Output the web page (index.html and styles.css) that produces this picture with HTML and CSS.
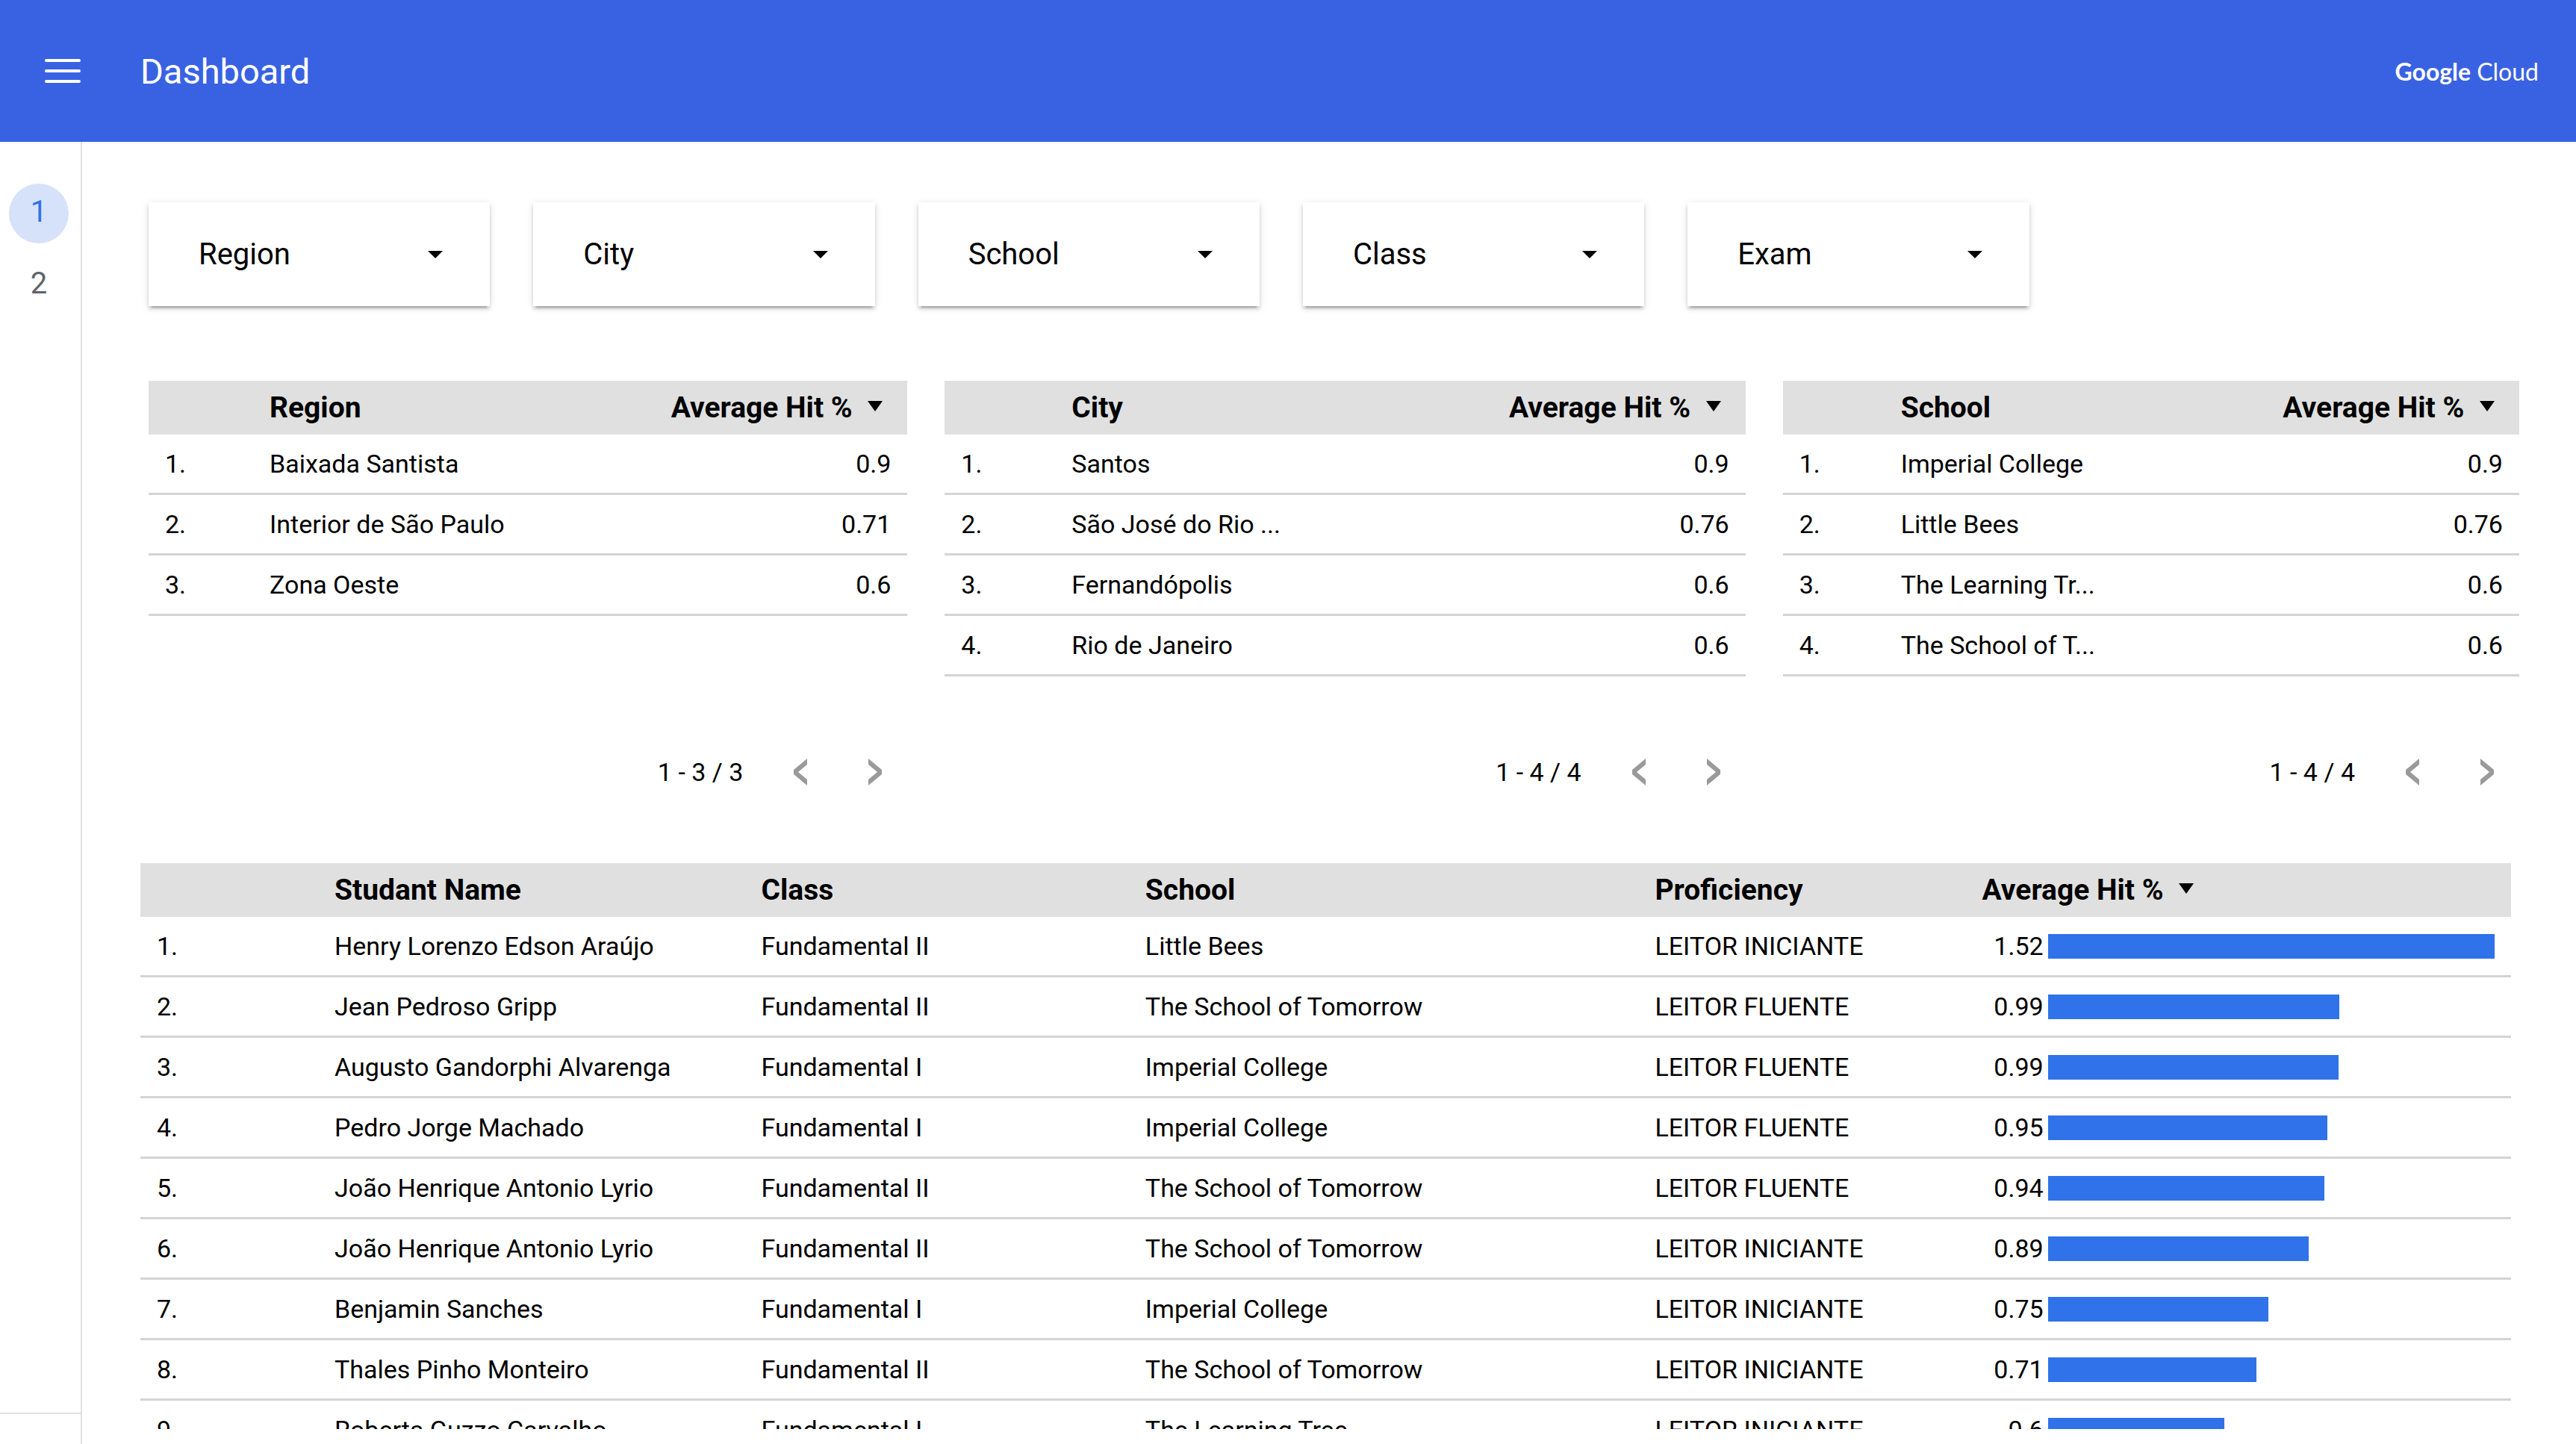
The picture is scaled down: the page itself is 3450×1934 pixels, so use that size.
FILE: index.html
```html
<!DOCTYPE html>
<html lang="en">
<head>
<meta charset="utf-8">
<title>Dashboard</title>
<meta name="viewport" content="width=device-width, initial-scale=1">
<link rel="stylesheet" href="styles.css">
</head>
<body>
<header class="topbar">
  <button class="menu-button" type="button" aria-label="Menu">
    <svg viewBox="0 0 48 32" width="48" height="32" fill="none" stroke="#fff" stroke-width="4" stroke-linecap="round"><path d="M2 2H46M2 16H46M2 30H46"/></svg>
  </button>
  <h1 class="title">Dashboard</h1>
  <a class="brand" href="#"><span class="brand-google">Google</span><span class="brand-cloud">Cloud</span></a>
</header>

<div class="layout">
  <nav class="pages" aria-label="Pages">
    <div class="page-list">
      <a class="page current" href="#" aria-current="page">1</a>
      <a class="page" href="#">2</a>
    </div>
    <div class="pages-foot"></div>
  </nav>

  <main class="report">
    <form class="filters">
      <label class="filter"><select aria-label="Region"><option>Region</option></select><svg class="caret" viewBox="0 0 20 10"><path d="M0 0H20L10 10Z"/></svg></label>
      <label class="filter"><select aria-label="City"><option>City</option></select><svg class="caret" viewBox="0 0 20 10"><path d="M0 0H20L10 10Z"/></svg></label>
      <label class="filter"><select aria-label="School"><option>School</option></select><svg class="caret" viewBox="0 0 20 10"><path d="M0 0H20L10 10Z"/></svg></label>
      <label class="filter"><select aria-label="Class"><option>Class</option></select><svg class="caret" viewBox="0 0 20 10"><path d="M0 0H20L10 10Z"/></svg></label>
      <label class="filter"><select aria-label="Exam"><option>Exam</option></select><svg class="caret" viewBox="0 0 20 10"><path d="M0 0H20L10 10Z"/></svg></label>
    </form>

    <div class="summaries">
      <section class="panel">
        <table class="data by-region">
          <colgroup><col class="c-index"><col class="c-name"><col></colgroup>
          <thead><tr><th></th><th>Region</th><th class="num">Average Hit % <svg class="sort" viewBox="0 0 20 14"><path d="M0 0H20L10 14Z"/></svg></th></tr></thead>
          <tbody>
            <tr><td>1.</td><td>Baixada Santista</td><td class="num">0.9</td></tr>
            <tr><td>2.</td><td>Interior de São Paulo</td><td class="num">0.71</td></tr>
            <tr><td>3.</td><td>Zona Oeste</td><td class="num">0.6</td></tr>
          </tbody>
        </table>
        <div class="pager">
          <span>1 - 3 / 3</span>
          <button type="button" aria-label="Previous"><svg viewBox="0 0 18 36"><path d="M18 0V8L6 18L18 28V36L0 21V15Z"/></svg></button>
          <button type="button" aria-label="Next"><svg viewBox="0 0 18 36"><path d="M0 0V8L12 18L0 28V36L18 21V15Z"/></svg></button>
        </div>
      </section>

      <section class="panel">
        <table class="data by-city">
          <colgroup><col class="c-index"><col class="c-name"><col></colgroup>
          <thead><tr><th></th><th>City</th><th class="num">Average Hit % <svg class="sort" viewBox="0 0 20 14"><path d="M0 0H20L10 14Z"/></svg></th></tr></thead>
          <tbody>
            <tr><td>1.</td><td>Santos</td><td class="num">0.9</td></tr>
            <tr><td>2.</td><td>São José do Rio ...</td><td class="num">0.76</td></tr>
            <tr><td>3.</td><td>Fernandópolis</td><td class="num">0.6</td></tr>
            <tr><td>4.</td><td>Rio de Janeiro</td><td class="num">0.6</td></tr>
          </tbody>
        </table>
        <div class="pager">
          <span>1 - 4 / 4</span>
          <button type="button" aria-label="Previous"><svg viewBox="0 0 18 36"><path d="M18 0V8L6 18L18 28V36L0 21V15Z"/></svg></button>
          <button type="button" aria-label="Next"><svg viewBox="0 0 18 36"><path d="M0 0V8L12 18L0 28V36L18 21V15Z"/></svg></button>
        </div>
      </section>

      <section class="panel">
        <table class="data by-school">
          <colgroup><col class="c-index"><col class="c-name"><col></colgroup>
          <thead><tr><th></th><th>School</th><th class="num">Average Hit % <svg class="sort" viewBox="0 0 20 14"><path d="M0 0H20L10 14Z"/></svg></th></tr></thead>
          <tbody>
            <tr><td>1.</td><td>Imperial College</td><td class="num">0.9</td></tr>
            <tr><td>2.</td><td>Little Bees</td><td class="num">0.76</td></tr>
            <tr><td>3.</td><td>The Learning Tr...</td><td class="num">0.6</td></tr>
            <tr><td>4.</td><td>The School of T...</td><td class="num">0.6</td></tr>
          </tbody>
        </table>
        <div class="pager">
          <span>1 - 4 / 4</span>
          <button type="button" aria-label="Previous"><svg viewBox="0 0 18 36"><path d="M18 0V8L6 18L18 28V36L0 21V15Z"/></svg></button>
          <button type="button" aria-label="Next"><svg viewBox="0 0 18 36"><path d="M0 0V8L12 18L0 28V36L18 21V15Z"/></svg></button>
        </div>
      </section>
    </div>

    <section class="students">
      <table class="data student-table">
        <colgroup><col class="s-index"><col class="s-name"><col class="s-class"><col class="s-school"><col class="s-level"><col></colgroup>
        <thead><tr><th></th><th>Studant Name</th><th>Class</th><th>School</th><th>Proficiency</th><th>Average Hit % <svg class="sort" viewBox="0 0 20 14"><path d="M0 0H20L10 14Z"/></svg></th></tr></thead>
        <tbody>
          <tr><td>1.</td><td>Henry Lorenzo Edson Araújo</td><td>Fundamental II</td><td>Little Bees</td><td>LEITOR INICIANTE</td><td><div class="score"><span>1.52</span><div class="track"><div class="bar" style="width:100%"></div></div></div></td></tr>
          <tr><td>2.</td><td>Jean Pedroso Gripp</td><td>Fundamental II</td><td>The School of Tomorrow</td><td>LEITOR FLUENTE</td><td><div class="score"><span>0.99</span><div class="track"><div class="bar" style="width:65.3%"></div></div></div></td></tr>
          <tr><td>3.</td><td>Augusto Gandorphi Alvarenga</td><td>Fundamental I</td><td>Imperial College</td><td>LEITOR FLUENTE</td><td><div class="score"><span>0.99</span><div class="track"><div class="bar" style="width:65.1%"></div></div></div></td></tr>
          <tr><td>4.</td><td>Pedro Jorge Machado</td><td>Fundamental I</td><td>Imperial College</td><td>LEITOR FLUENTE</td><td><div class="score"><span>0.95</span><div class="track"><div class="bar" style="width:62.6%"></div></div></div></td></tr>
          <tr><td>5.</td><td>João Henrique Antonio Lyrio</td><td>Fundamental II</td><td>The School of Tomorrow</td><td>LEITOR FLUENTE</td><td><div class="score"><span>0.94</span><div class="track"><div class="bar" style="width:61.9%"></div></div></div></td></tr>
          <tr><td>6.</td><td>João Henrique Antonio Lyrio</td><td>Fundamental II</td><td>The School of Tomorrow</td><td>LEITOR INICIANTE</td><td><div class="score"><span>0.89</span><div class="track"><div class="bar" style="width:58.4%"></div></div></div></td></tr>
          <tr><td>7.</td><td>Benjamin Sanches</td><td>Fundamental I</td><td>Imperial College</td><td>LEITOR INICIANTE</td><td><div class="score"><span>0.75</span><div class="track"><div class="bar" style="width:49.4%"></div></div></div></td></tr>
          <tr><td>8.</td><td>Thales Pinho Monteiro</td><td>Fundamental II</td><td>The School of Tomorrow</td><td>LEITOR INICIANTE</td><td><div class="score"><span>0.71</span><div class="track"><div class="bar" style="width:46.7%"></div></div></div></td></tr>
          <tr><td>9.</td><td>Roberta Guzzo Carvalho</td><td>Fundamental I</td><td>The Learning Tree</td><td>LEITOR INICIANTE</td><td><div class="score"><span>0.6</span><div class="track"><div class="bar" style="width:39.5%"></div></div></div></td></tr>
        </tbody>
      </table>
    </section>
  </main>
</div>
</body>
</html>
```

FILE: styles.css
```css
* { box-sizing: border-box; }

body {
  margin: 0;
  height: 100vh;
  display: flex;
  flex-direction: column;
  overflow: hidden;
  background: #fff;
  color: #000;
  font-family: Roboto, "Liberation Sans", sans-serif;
  font-size: 34px;
}

button, select {
  margin: 0;
  padding: 0;
  border: 0;
  background: none;
  color: inherit;
  font: inherit;
}

a { color: inherit; text-decoration: none; }

svg { display: block; }

/* Top bar */
.topbar {
  flex: none;
  height: 190px;
  display: flex;
  align-items: center;
  padding: 0 50px 0 60px;
  background: #3962e3;
  color: #fff;
}

.menu-button { margin-right: 80px; }

.title {
  margin: 0;
  font-size: 47px;
  font-weight: 400;
}

.brand {
  margin-left: auto;
  display: flex;
  align-items: baseline;
  gap: 8px;
  font-family: Lato, sans-serif;
  font-size: 32px;
}

.brand-google { font-weight: 700; }

/* Page switcher */
.layout {
  flex: 1;
  min-height: 0;
  display: flex;
}

.pages {
  flex: none;
  width: 110px;
  display: flex;
  flex-direction: column;
  border-right: 2px solid #e0e0e0;
}

.page-list {
  flex: 1;
  display: flex;
  flex-direction: column;
  gap: 16px;
  padding: 56px 0 0 12px;
}

.page {
  width: 80px;
  height: 80px;
  padding-bottom: 6px;
  display: flex;
  align-items: center;
  justify-content: center;
  border-radius: 50%;
  color: #5f6368;
  font-size: 40px;
}

.page.current {
  background: #d6e2fa;
  color: #2f72ea;
}

.pages-foot {
  height: 42px;
  border-top: 2px solid #e0e0e0;
}

/* Report canvas */
.report {
  flex: 1;
  min-width: 0;
  margin-bottom: 20px;
  padding-top: 81px;
  overflow: hidden;
}

.filters {
  display: grid;
  grid-template-columns: repeat(5, minmax(0, 457fr)) minmax(0, 598fr);
  column-gap: 58px;
  padding: 0 76px 0 89px;
}

.filter {
  display: grid;
  align-items: center;
  box-shadow: 0 6px 2px -4px rgba(0, 0, 0, .2), 0 4px 4px rgba(0, 0, 0, .14), 0 2px 10px rgba(0, 0, 0, .12);
}

.filter select {
  grid-area: 1 / 1;
  width: 100%;
  height: 139px;
  padding: 0 67px;
  appearance: none;
  font-size: 40px;
}

.caret {
  grid-area: 1 / 1;
  justify-self: end;
  width: 20px;
  height: 10px;
  margin-right: 63px;
  pointer-events: none;
}

.summaries {
  display: grid;
  grid-template-columns: 1016fr 1072fr 986fr;
  column-gap: 50px;
  padding: 100px 76px 0 89px;
}

.panel {
  display: flex;
  flex-direction: column;
  min-width: 0;
}

/* Tables */
.data {
  width: 100%;
  table-layout: fixed;
  border-collapse: separate;
  border-spacing: 0;
  text-align: left;
}

.data th {
  height: 72px;
  padding: 0 22px;
  background: #e0e0e0;
  font-size: 39px;
  line-height: 44px;
  font-weight: 700;
  white-space: nowrap;
}

.data td {
  height: 81px;
  padding: 0 22px;
  border-bottom: 3px solid #d4d4d4;
  white-space: nowrap;
}

.data .num { text-align: right; }

.sort {
  display: inline-block;
  vertical-align: 8px;
  width: 20px;
  height: 14px;
  margin: 0 11px;
}

.by-region .c-index { width: 140px; }
.by-region .c-name { width: 43%; }
.by-city .c-index { width: 148px; }
.by-city .c-name { width: 31%; }
.by-school .c-index { width: 136px; }
.by-school .c-name { width: 31%; }

.pager {
  margin-top: auto;
  padding: 110px 34px 0 0;
  display: flex;
  align-items: center;
  justify-content: flex-end;
}

.pager span {
  margin-right: 68px;
  line-height: 36px;
}

.pager button + button { margin-left: 82px; }

.pager svg {
  width: 18px;
  height: 36px;
  fill: #9a9a9a;
}

.students { padding: 104px 87px 0 78px; }

.s-index { width: 238px; }
.s-name { width: 18%; }
.s-class { width: 16.2%; }
.s-school { width: 21.5%; }
.s-level { width: 13.8%; }

.score {
  display: flex;
  align-items: center;
  gap: 6px;
}

.score span {
  width: 82px;
  text-align: right;
}

.track { flex: 1; }

.bar {
  height: 33px;
  background: #2f72ea;
}
```
